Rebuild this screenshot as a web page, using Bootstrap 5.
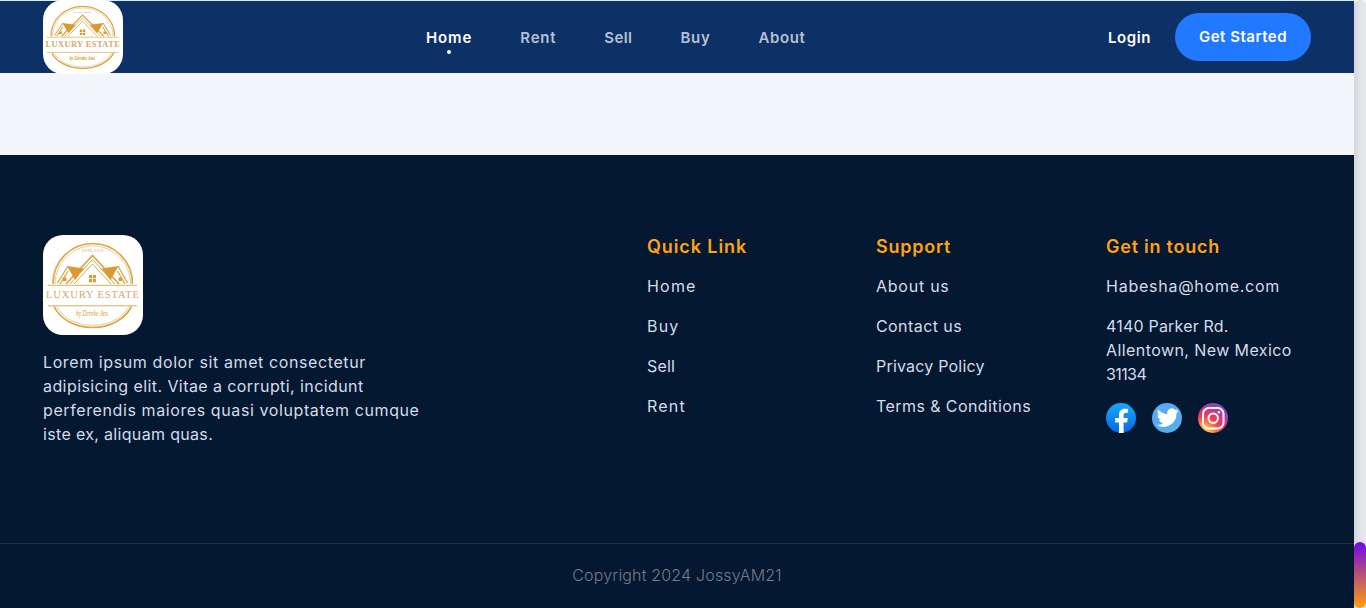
<!DOCTYPE html>
<html lang="en">
<head>
<meta charset="utf-8">
<meta name="viewport" content="width=device-width, initial-scale=1">
<title>Luxury Estate</title>
<link href="https://cdn.jsdelivr.net/npm/bootstrap@5.3.0/dist/css/bootstrap.min.css" rel="stylesheet">
<style>
  body { font-family: Inter, "Open Sans", sans-serif; background: #f2f5fa; font-size: 16px; line-height: 24px; height: 608px; overflow: hidden; }
  .page-main { width: 1354px; }
  .scroll-track { width: 12px; background: linear-gradient(90deg, #d2d5da, #e2e4e9 50%, #e5e7eb); border-radius: 6px 6px 0 0; }
  .scroll-thumb { height: 66px; border-radius: 6px; background: linear-gradient(#7008e8, #ff9d0a); }

  .site-header { height: 73px; padding: 0 43px; background: #0d3066; border-top: 1px solid #dcebfa; font-size: 15px; font-weight: 600; }
  .brand { width: 383px; }
  .header-logo { width: 80px; height: 74px; margin: -1px 0; border-radius: 20px; display: block; overflow: hidden; }
  .menu { gap: 48px; }
  .menu a { color: #b6c1d1; text-decoration: none; display: block; white-space: nowrap; padding-top: 1px; }
  .menu a.current { color: #fff; }
  .menu a.current::after { content: ""; position: absolute; left: 50%; bottom: -4px; width: 4px; height: 4px; margin-left: -2px; border-radius: 50%; background: #fff; }
  .login { width: 43px; letter-spacing: .58px; padding-top: 1px; }
  .start-btn { width: 136px; height: 48px; padding: 1px 0 0; border-radius: 24px; background: #2079ff; color: #fff; font-size: 15px; font-weight: 600; letter-spacing: .5px; }
  .start-btn:hover { background: #0d65e8; color: #fff; }

  .spacer { height: 82px; }
  .site-footer { height: 453px; background: #051831; color: #d3dcea; }
  .footer-grid { height: 388px; padding: 80px 43px 0; display: grid; grid-template-columns: 604px 229px 230px 205px; align-items: start; }
  .footer-logo { width: 100px; height: 100px; border-radius: 20px; display: block; overflow: hidden; }
  .footer-grid h2 { font-size: 18px; line-height: 24px; font-weight: 600; color: #ffa216; margin: 0 0 -1px; }
  .footer-grid a, .footer-grid h2, .footer-grid p, .copyright, .about-text { white-space: nowrap; }
  .footer-grid a { color: inherit; text-decoration: none; }
  .about-text { padding-top: 15px; }
  .copyright { height: 65px; padding-bottom: 2px; border-top: 1px solid #282f3b; color: #737c8a; font-weight: 300; }
  .socials { padding-top: 1px; }
  .socials svg { display: block; }

  .t1 { letter-spacing: .2px; } .t2 { letter-spacing: .33px; }
  .t3 { letter-spacing: .42px; } .t4 { letter-spacing: .6px; } .t5 { letter-spacing: .75px; }
  .t6 { letter-spacing: .9px; } .t7 { letter-spacing: 1.2px; } .tn { letter-spacing: -.6px; }
  .tc { letter-spacing: .17px; }
</style>
</head>
<body>
<svg width="0" height="0" class="position-absolute" aria-hidden="true">
  <symbol id="logo" viewBox="0 0 100 100" preserveAspectRatio="none">
    <rect width="100" height="100" fill="#fff"/>
    <g fill="none" stroke="#d9a648">
      <path d="M10 49C10 26 28 8.500 49.700 8.500S89.500 26 89.500 49M11 71.500C17 84 32 92.500 49.700 92.500S82 84 88.500 71.500" stroke-width="1.700"/>
      <path d="M12 49C12 28 29 10.800 49.700 10.800S87.500 28 87.500 49M13.500 71.500C20 83 33 90.300 49.700 90.300S79 83 86 71.500" stroke-width=".6"/>
      <path d="M4.500 50.300H94M5 70.800H94" stroke-width=".9"/>
      <path d="M23 49L49.500 20.500L76 49" stroke-width="1.700"/>
      <path d="M27 49L49.500 24.500L72 49M31 49L49.500 29L68 49" stroke-width="1"/>
      <path d="M14.500 48L25 31M84.500 48L75 31M17 49L25 36M82 49L74.500 36" stroke-width="1.300"/>
    </g>
    <g fill="#d99a32">
      <path d="M24 31L41 33.500L34 41.500ZM75.500 31L58.500 33.500L65.500 41.500ZM24 31L36 40L32 45ZM75.500 31L63.500 40L67.500 45Z"/>
      <path d="M46 40h3v3.200h-3zm3.900 0h3v3.200h-3zM46 44.100h3v3.200h-3zm3.900 0h3v3.200h-3zM20 42.500h3.500v3.500h-3.500zM75.500 42.500h3.500v3.500h-3.500z"/>
      <text x="49.500" y="17" text-anchor="middle" font-family="Liberation Serif, serif" font-size="3.600" textLength="21">ESTD 2018</text>
      <text x="3" y="63.400" font-family="Liberation Serif, serif" font-size="10.500" textLength="93" lengthAdjust="spacing" fill="#d0aa6c">LUXURY ESTATE</text>
      <text x="33" y="80.500" font-family="Liberation Serif, serif" font-style="italic" font-size="7.500" textLength="32" lengthAdjust="spacingAndGlyphs">by Dereke Ans</text>
    </g>
  </symbol>
</svg>

<div class="d-flex h-100">
  <div class="page-main flex-shrink-0">
    <header class="site-header d-flex align-items-center">
      <a href="#" class="brand flex-shrink-0" aria-label="Luxury Estate"><svg class="header-logo"><use href="#logo"/></svg></a>
      <nav><ul class="menu list-unstyled d-flex m-0">
        <li><a href="#" class="current position-relative t6">Home</a></li>
        <li><a href="#" class="t5">Rent</a></li>
        <li><a href="#" class="t3">Sell</a></li>
        <li><a href="#" class="t5">Buy</a></li>
        <li><a href="#" class="t4">About</a></li>
      </ul></nav>
      <div class="d-flex align-items-center gap-4 ms-auto">
        <a href="#" class="login text-white text-decoration-none">Login</a>
        <a href="#" class="btn start-btn border-0 d-flex align-items-center justify-content-center">Get Started</a>
      </div>
    </header>
    <main class="spacer"></main>
    <footer class="site-footer">
      <div class="footer-grid">
        <div>
          <svg class="footer-logo"><use href="#logo"/></svg>
          <div class="about-text">
            <div class="t4">Lorem ipsum dolor sit amet consectetur</div>
            <div class="t3">adipisicing elit. Vitae a corrupti, incidunt</div>
            <div class="t4">perferendis maiores quasi voluptatem cumque</div>
            <div class="t2">iste ex, aliquam quas.</div>
          </div>
        </div>
        <div class="d-flex flex-column gap-3">
          <h2 class="t6">Quick Link</h2>
          <a href="#" class="t7">Home</a>
          <a href="#" class="t7">Buy</a>
          <a href="#" class="t1">Sell</a>
          <a href="#" class="t7">Rent</a>
        </div>
        <div class="d-flex flex-column gap-3">
          <h2 class="t5">Support</h2>
          <a href="#" class="t5">About us</a>
          <a href="#" class="t3">Contact us</a>
          <a href="#" class="t1">Privacy Policy</a>
          <a href="#" class="t3">Terms &amp; Conditions</a>
        </div>
        <div class="d-flex flex-column gap-3">
          <h2 class="t5">Get in touch</h2>
          <a href="#" class="t5">Habesha@home.com</a>
          <address class="m-0"><span class="t1">4140 Parker Rd.</span><br><span class="t3">Allentown, New Mexico</span><br><span class="tn">31134</span></address>
          <div class="socials d-flex gap-3">
            <a href="#" aria-label="Facebook"><svg width="30" height="30" viewBox="0 0 30 30">
              <defs><linearGradient id="fb" x2="0" y2="1"><stop stop-color="#19a9fb"/><stop offset="1" stop-color="#0468e3"/></linearGradient></defs>
              <circle cx="15" cy="15" r="15" fill="url(#fb)"/>
              <path fill="#fff" d="M13 30V19.400H9.200V15.100H13v-3.300c0-3.800 2.200-6.100 5.900-6.100 1.600 0 2.900.2 3.200.3v3.700h-2c-1.900 0-2.500 1.100-2.500 2.400v3h4.200l-.7 4.300h-3.500V30z"/></svg></a>
            <a href="#" aria-label="Twitter"><svg width="30" height="30" viewBox="0 0 30 30">
              <circle cx="15" cy="15" r="15" fill="#55acee"/>
              <path fill="#fff" transform="translate(3.400 4.400)" d="M23.300 3.300c-.8.400-1.700.6-2.600.7.900-.6 1.600-1.400 2-2.500-.9.500-1.900.9-2.900 1.100A4.550 4.550 0 0 0 12 6.800C8.200 6.600 4.900 4.800 2.700 2.100c-1.200 2-.6 4.700 1.400 6.100-.7 0-1.500-.2-2.100-.6 0 2.200 1.600 4.100 3.700 4.600-.7.200-1.400.2-2.100.1.600 1.800 2.300 3.100 4.300 3.200A9.200 9.200 0 0 1 1.100 17.400a13 13 0 0 0 20-11.500c.9-.7 1.700-1.500 2.200-2.600z"/></svg></a>
            <a href="#" aria-label="Instagram"><svg width="30" height="30" viewBox="0 0 30 30">
              <defs><radialGradient id="ig" cx=".2" cy="1" r="1.100"><stop stop-color="#ffd45b"/><stop offset=".2" stop-color="#ffad45"/><stop offset=".5" stop-color="#ef4150"/><stop offset=".75" stop-color="#c5349b"/><stop offset="1" stop-color="#7050c8"/></radialGradient></defs>
              <circle cx="15" cy="15" r="15" fill="url(#ig)"/>
              <rect x="5" y="5" width="20.500" height="20.500" rx="6" fill="none" stroke="#fff" stroke-width="2"/>
              <circle cx="15.200" cy="15.200" r="4.700" fill="none" stroke="#fff" stroke-width="2"/>
              <circle cx="20.900" cy="9.300" r="1.250" fill="#fff"/></svg></a>
          </div>
        </div>
      </div>
      <div class="copyright d-flex align-items-center justify-content-center tc">Copyright 2024 JossyAM21</div>
    </footer>
  </div>
  <div class="scroll-track d-flex flex-column justify-content-end"><div class="scroll-thumb"></div></div>
</div>
<script src="https://cdn.jsdelivr.net/npm/bootstrap@5.3.0/dist/js/bootstrap.bundle.min.js"></script>
</body>
</html>
